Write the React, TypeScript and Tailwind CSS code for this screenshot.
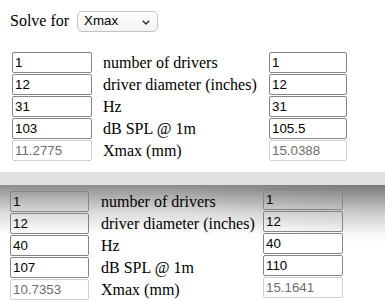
import React from "react";

type Row = { left: string; label: string; right: string };

const serif = "font-['Liberation_Serif','Times_New_Roman',serif] text-[16px] text-black";
const sans = "font-['Liberation_Sans',Arial,sans-serif]";

function Field({ value, muted }: { value: string; muted?: boolean }) {
  return (
    <input
      readOnly
      value={value}
      className={`block h-[21px] w-full rounded-[2px] border bg-transparent px-[2px] text-[13.33px] leading-none outline-none ${sans} ${
        muted ? "border-[#cfcfcf] text-[#6d6d6d]" : "border-[#858585] text-black"
      }`}
    />
  );
}

function Table({
  rows,
  leftX,
  leftW,
  labelGap,
  rightX,
  rightW,
  rightShift,
}: {
  rows: Row[];
  leftX: string;
  leftW: string;
  labelGap: string;
  rightX: string;
  rightW: string;
  rightShift: string;
}) {
  return (
    <div className={`flex ${leftX}`}>
      <div className={`flex flex-col gap-[1px] ${leftW}`}>
        {rows.map((r, i) => (
          <Field key={i} value={r.left} muted={i === rows.length - 1} />
        ))}
      </div>
      <div className={`flex flex-col gap-[1px] ${labelGap}`}>
        {rows.map((r, i) => (
          <div key={i} className={`flex h-[21px] items-center whitespace-nowrap ${serif}`}>
            {r.label}
          </div>
        ))}
      </div>
      <div className={`absolute flex flex-col gap-[1px] ${rightX} ${rightW} ${rightShift}`}>
        {rows.map((r, i) => (
          <Field key={i} value={r.right} muted={i === rows.length - 1} />
        ))}
      </div>
    </div>
  );
}

export default function App() {
  const first: Row[] = [
    { left: "1", label: "number of drivers", right: "1" },
    { left: "12", label: "driver diameter (inches)", right: "12" },
    { left: "31", label: "Hz", right: "31" },
    { left: "103", label: "dB SPL @ 1m", right: "105.5" },
    { left: "11.2775", label: "Xmax (mm)", right: "15.0388" },
  ];
  const second: Row[] = [
    { left: "1", label: "number of drivers", right: "1" },
    { left: "12", label: "driver diameter (inches)", right: "12" },
    { left: "40", label: "Hz", right: "40" },
    { left: "107", label: "dB SPL @ 1m", right: "110" },
    { left: "10.7353", label: "Xmax (mm)", right: "15.1641" },
  ];

  return (
    <div className="h-[300px] w-[385px] overflow-hidden bg-white">
      <div className="flex items-center pl-[10px] pt-[9px]">
        <span className={serif}>Solve for</span>
        <div
          className={`relative ml-[8px] flex h-[21px] w-[81px] items-center rounded-[5px] border border-[#c3c3c3] bg-[linear-gradient(#ffffff,#f4f4f4)] pl-[6px] text-[13.33px] text-black ${sans}`}
        >
          Xmax
          <svg
            className="absolute right-[7px] top-[8px]"
            width="8"
            height="5"
            viewBox="0 0 8 5"
            fill="none"
            stroke="#222"
            strokeWidth="1.3"
          >
            <path d="M0.8 0.8 L4 4 L7.2 0.8" />
          </svg>
        </div>
      </div>

      <div className="relative mt-[19px]">
        <Table
          rows={first}
          leftX="pl-[12px]"
          leftW="w-[80px]"
          labelGap="ml-[11px]"
          rightX="left-[269px]"
          rightW="w-[78px]"
          rightShift="top-0"
        />
      </div>

      <div className="mt-[11px] h-[13px] bg-[#e0e0e0]" />

      <div className="relative h-[120px] bg-[radial-gradient(ellipse_55%_60px_at_100%_0%,rgba(0,0,0,0.14),rgba(0,0,0,0)),linear-gradient(180deg,#8c8c8c_0px,#b0b0b0_12px,#dcdcdc_28px,#ffffff_50px)] pt-[6px]">
        <div className="relative">
          <Table
            rows={second}
            leftX="pl-[10px]"
            leftW="w-[79px]"
            labelGap="ml-[12px]"
            rightX="left-[263px]"
            rightW="w-[80px]"
            rightShift="-top-[2px]"
          />
        </div>
      </div>
    </div>
  );
}
